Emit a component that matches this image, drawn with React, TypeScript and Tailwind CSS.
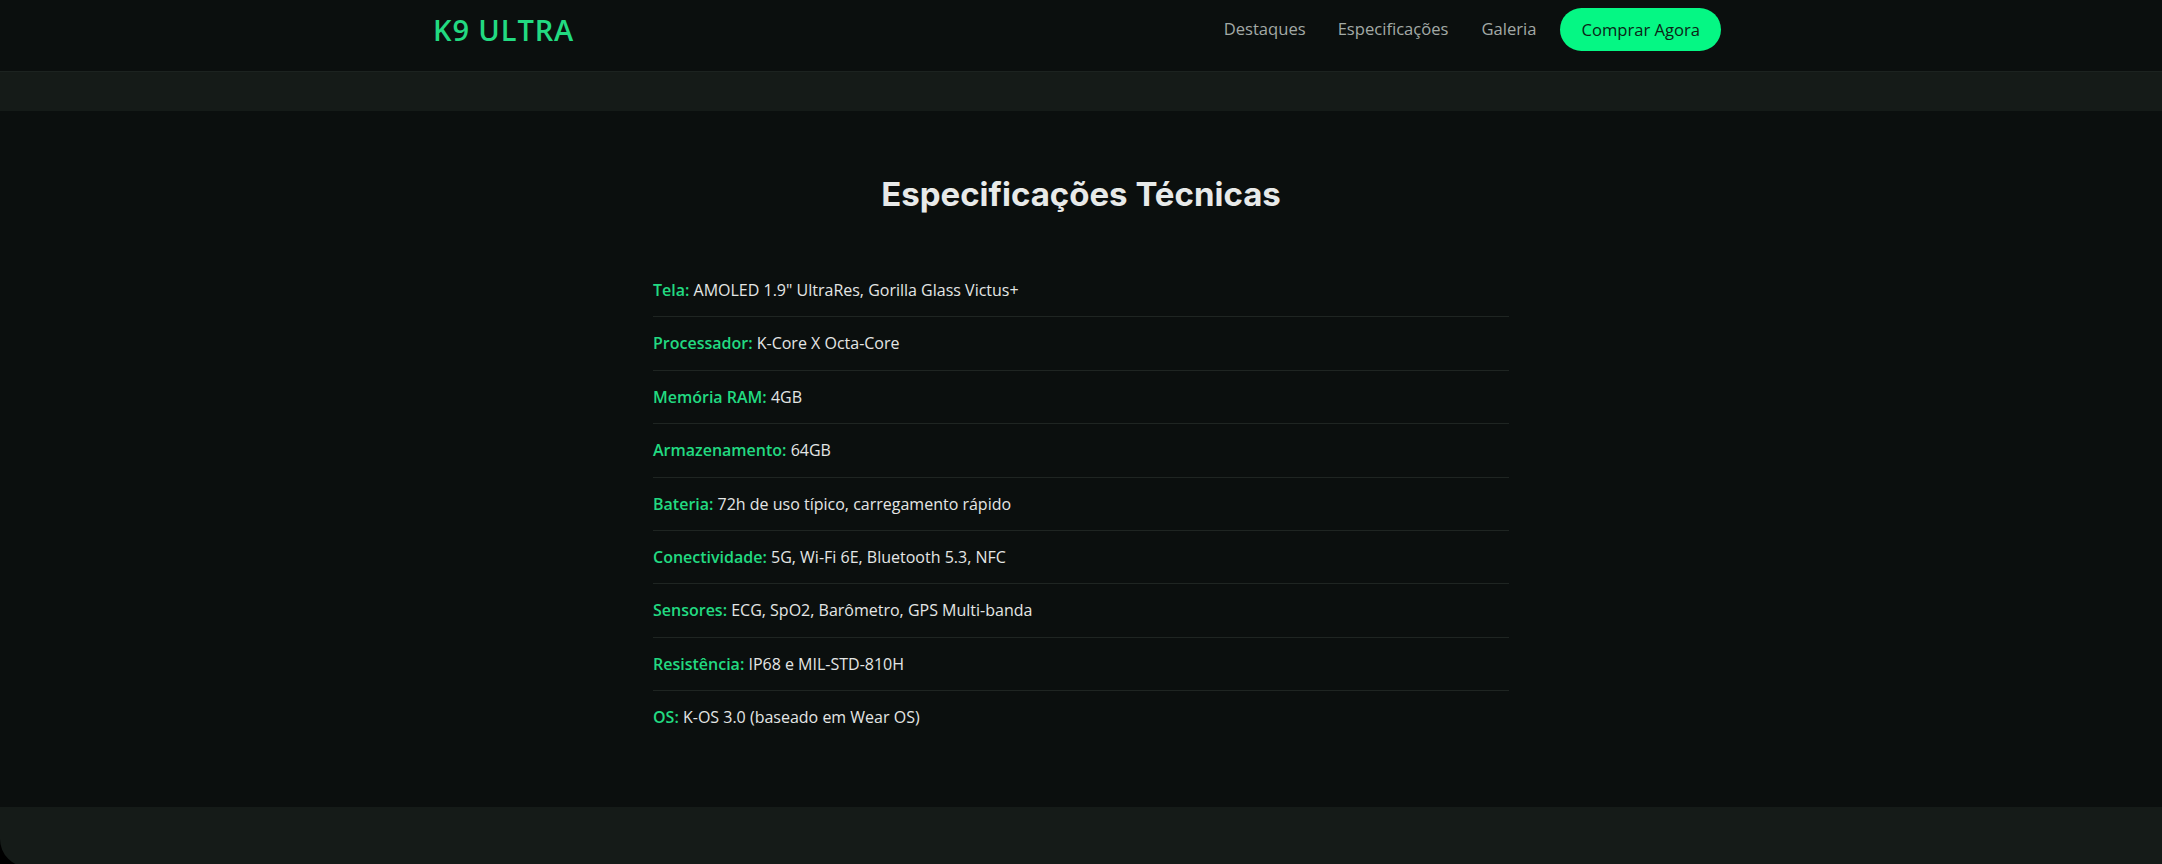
import React from "react";

const specs: [string, string][] = [
  ["Tela:", 'AMOLED 1.9" UltraRes, Gorilla Glass Victus+'],
  ["Processador:", "K-Core X Octa-Core"],
  ["Memória RAM:", "4GB"],
  ["Armazenamento:", "64GB"],
  ["Bateria:", "72h de uso típico, carregamento rápido"],
  ["Conectividade:", "5G, Wi-Fi 6E, Bluetooth 5.3, NFC"],
  ["Sensores:", "ECG, SpO2, Barômetro, GPS Multi-banda"],
  ["Resistência:", "IP68 e MIL-STD-810H"],
  ["OS:", "K-OS 3.0 (baseado em Wear OS)"],
];

export default function App() {
  return (
    <div className="h-[864px] w-full overflow-hidden bg-black font-['Open_Sans',sans-serif] text-[#e4e6e5]">
      <header className="h-[72px] bg-[#0b0f0e] border-b border-[#1c2320]">
        <div className="mx-auto flex w-[1296px] items-start justify-between pl-0 pt-[8px] pr-[8px]">
          <div className="flex h-[43px] items-center text-[29px] font-semibold tracking-[0.9px] text-[#22da81]">
            K9 ULTRA
          </div>
          <nav className="flex h-[43px] items-center text-[16.6px] text-[#a3aaa6]">
            <a className="mr-[32px]">Destaques</a>
            <a className="mr-[33px]">Especificações</a>
            <a className="mr-[24px]">Galeria</a>
            <a className="rounded-full bg-[#05f784] px-[21px] py-[10px] leading-[23px] text-[#0b2416]">
              Comprar Agora
            </a>
          </nav>
        </div>
      </header>
      <div className="h-[39px] bg-[#151b18]" />
      <main className="bg-[#0b0f0e] pt-[64px] pb-[63px]">
        <h2 className="text-center font-['Inter',sans-serif] text-[33px] font-bold leading-[38px] text-[#e8eae9]">
          Especificações Técnicas
        </h2>
        <ul className="mx-auto mt-[51px] w-[856px]">
          {specs.map(([k, v], i) => (
            <li
              key={k}
              className={
                "py-[14px] text-[16px] leading-[24.4px] text-[#e4e6e5] " +
                (i < specs.length - 1 ? "border-b border-[#1f2522]" : "")
              }
            >
              <span className="font-semibold text-[#22da81]">{k}</span> {v}
            </li>
          ))}
        </ul>
      </main>
      <div className="h-[60px] rounded-bl-[28px] bg-[#151b18]" />
    </div>
  );
}
